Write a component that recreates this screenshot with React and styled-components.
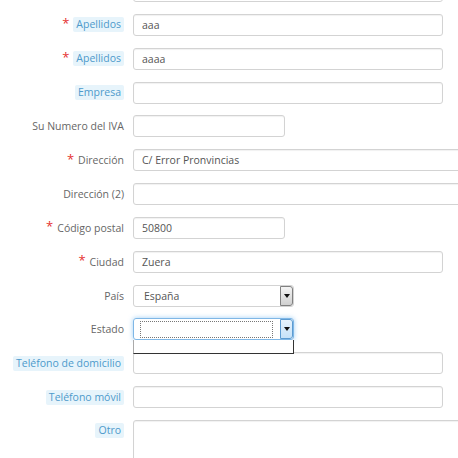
import React from "react";
import styled, { createGlobalStyle, css } from "styled-components";

const Global = createGlobalStyle`
  html, body { margin: 0; padding: 0; background: #fff; }
  body { width: 458px; height: 458px; overflow: hidden; font-family: "Open Sans", "DejaVu Sans", sans-serif; }
`;

const Form = styled.div`
  display: grid;
  grid-template-columns: 125px 1fr;
  column-gap: 8px;
  row-gap: 11.85px;
  margin-top: -20px;
  width: 560px;
`;

const LabelCell = styled.div`
  display: flex;
  justify-content: flex-end;
  align-items: center;
  gap: 4px;
  height: 22px;
  padding-right: 1px;
`;

const Req = styled.span`
  color: #e5312f;
  font-size: 13px;
  line-height: 1;
  position: relative;
  top: -1px;
`;

const Plain = styled.span`
  font-size: 10.5px;
  color: #666;
  white-space: nowrap;
`;

const Badge = styled.span`
  font-size: 10.5px;
  color: #4d9acb;
  background: #e7f4fb;
  border-radius: 2px;
  padding: 0 3px;
  line-height: 15px;
  white-space: nowrap;
`;

const widths = { short: "152px", wide: "310px", xwide: "400px" };

const Input = styled.div`
  box-sizing: border-box;
  height: 22px;
  width: ${(p) => widths[p.$size]};
  border: 1px solid #d3d3d3;
  border-radius: 3px;
  box-shadow: inset 0 1px 1px rgba(0, 0, 0, 0.06);
  font-size: 10.5px;
  color: #555;
  padding-left: 8px;
  display: flex;
  align-items: center;
`;

const Textarea = styled(Input)`
  height: 70px;
`;

const SelectWrap = styled.div`
  position: relative;
  width: 161px;
  height: 22px;
`;

const SelectBox = styled.div`
  box-sizing: border-box;
  height: 22px;
  width: 161px;
  border: 1px solid ${(p) => (p.$focus ? "#7fb7e6" : "#d3d3d3")};
  border-radius: 3px;
  ${(p) =>
    p.$focus &&
    css`
      box-shadow: 0 0 5px rgba(82, 168, 236, 0.55);
    `}
  display: flex;
  align-items: stretch;
  padding: 2px 0 1px 6px;
  font-size: 10.5px;
  color: #555;
`;

const SelectText = styled.div`
  flex: 1;
  display: flex;
  align-items: center;
  padding-left: 4px;
  margin-right: 6px;
  ${(p) =>
    p.$focus &&
    css`
      border: 1px dotted #777;
      margin: 0 7px 0 0;
    `}
`;

const Arrow = styled.div`
  box-sizing: border-box;
  width: 13px;
  margin: -2px 0 -1px 0;
  border: 1px solid ${(p) => (p.$focus ? "#5c9bd1" : "#808080")};
  border-radius: 0 3px 3px 0;
  background: ${(p) =>
    p.$focus
      ? "linear-gradient(#e6f3fd, #c6e2f8)"
      : "linear-gradient(#f4f4f4, #d0d0d0)"};
  display: flex;
  align-items: center;
  justify-content: center;
  &::after {
    content: "";
    border-left: 3.5px solid transparent;
    border-right: 3.5px solid transparent;
    border-top: 4px solid #111;
  }
`;

const DropList = styled.div`
  position: absolute;
  left: 0;
  top: 22px;
  box-sizing: border-box;
  width: 161px;
  height: 14px;
  background: #fff;
  border-left: 1px solid #aaa;
  border-right: 1px solid #333;
  border-bottom: 1px solid #333;
  z-index: 2;
`;

function Label({ text, req, badge }) {
  return (
    <LabelCell>
      {req && <Req>*</Req>}
      {text && (badge ? <Badge>{text}</Badge> : <Plain>{text}</Plain>)}
    </LabelCell>
  );
}

const rows = [
  { text: "", size: "wide" },
  { text: "Apellidos", req: true, badge: true, size: "wide", value: "aaa" },
  { text: "Apellidos", req: true, badge: true, size: "wide", value: "aaaa" },
  { text: "Empresa", badge: true, size: "wide" },
  { text: "Su Numero del IVA", size: "short" },
  { text: "Dirección", req: true, size: "xwide", value: "C/ Error Pronvincias" },
  { text: "Dirección (2)", size: "xwide" },
  { text: "Código postal", req: true, size: "short", value: "50800" },
  { text: "Ciudad", req: true, size: "wide", value: "Zuera" },
  { text: "País", select: true, value: "España" },
  { text: "Estado", select: true, focus: true, value: "" },
  { text: "Teléfono de domicilio", badge: true, size: "wide" },
  { text: "Teléfono móvil", badge: true, size: "wide" },
  { text: "Otro", badge: true, size: "xwide", area: true },
];

export default function App() {
  return (
    <>
      <Global />
      <Form>
        {rows.map((r, i) => (
          <React.Fragment key={i}>
            <Label text={r.text} req={r.req} badge={r.badge} />
            <div>
              {r.select ? (
                <SelectWrap>
                  <SelectBox $focus={r.focus}>
                    <SelectText $focus={r.focus}>{r.value}</SelectText>
                    <Arrow $focus={r.focus} />
                  </SelectBox>
                  {r.focus && <DropList />}
                </SelectWrap>
              ) : r.area ? (
                <Textarea $size={r.size} />
              ) : (
                <Input $size={r.size}>{r.value}</Input>
              )}
            </div>
          </React.Fragment>
        ))}
      </Form>
    </>
  );
}
